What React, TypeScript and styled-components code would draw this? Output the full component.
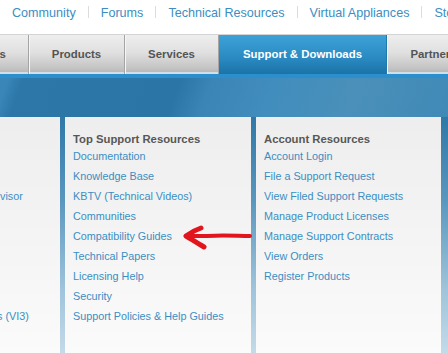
import styled, { createGlobalStyle } from "styled-components";

const GlobalStyle = createGlobalStyle`
  html, body {
    margin: 0;
    padding: 0;
    background: #ffffff;
    overflow: hidden;
  }
  body {
    font-family: "Liberation Sans", Arial, sans-serif;
  }
`;

const Page = styled.div`
  width: 448px;
  height: 353px;
  overflow: hidden;
  background: #ffffff;
`;

const TopLinks = styled.div`
  display: flex;
  align-items: center;
  height: 34px;
  padding: 0 0 11px 12px;
  box-sizing: border-box;
  white-space: nowrap;
`;

const TopLink = styled.a`
  color: #3b8ec2;
  font-size: 12.6px;
  text-decoration: none;
`;

const Separator = styled.span`
  display: inline-block;
  width: 1px;
  height: 12px;
  margin: 0 12px;
  vertical-align: -1px;
  background: #dcdcdc;
`;

const NavBar = styled.div`
  display: flex;
  width: 600px;
  height: 40px;
  margin-left: -68px;
  border-top: 1px solid #d4d4d4;
  box-sizing: border-box;
`;

const Tab = styled.div<{ $width: number; $active?: boolean }>`
  flex: 0 0 ${({ $width }) => $width}px;
  display: flex;
  align-items: center;
  justify-content: center;
  box-sizing: border-box;
  padding-bottom: 2px;
  font-size: 11.4px;
  font-weight: bold;
  white-space: nowrap;
  color: ${({ $active }) => ($active ? "#ffffff" : "#545454")};
  background: ${({ $active }) =>
    $active
      ? "linear-gradient(to bottom, #3da2d8 0%, #2b8cc4 55%, #1b73a6 100%)"
      : "linear-gradient(to bottom, #eeeeee 0%, #e0e0e0 45%, #c4c4c4 85%, #b2b2b2 100%)"};
  border-right: 1px solid ${({ $active }) => ($active ? "#1f79ac" : "#a4a4a4")};
  box-shadow: ${({ $active }) =>
    $active ? "none" : "inset 1px 0 0 #f6f6f6, inset 0 -2px 0 #d2dde4"};
`;

const Banner = styled.div`
  height: 43px;
  border-top: 4px solid #2a8fcc;
  box-sizing: border-box;
  background: linear-gradient(
    110deg,
    #3a86b8 0px,
    #3a86b8 8px,
    #2c76a8 22px,
    #2b74a6 170px,
    #3a84b6 200px,
    #418dbd 260px,
    #4a90ba 340px,
    #3f88b6 448px
  );
`;

const Content = styled.div`
  position: relative;
  display: flex;
  gap: 5px;
  height: 240px;
  background: linear-gradient(to bottom, #2f78a8 0%, #5a97be 35%, #9cc2da 70%, #c6dcea 100%);
`;

const Panel = styled.div<{ $width: number }>`
  flex: 0 0 ${({ $width }) => $width}px;
  box-sizing: border-box;
  padding: 15px 0 0 8px;
  overflow: hidden;
  background: linear-gradient(to bottom, #eeeeee 0%, #f4f4f4 50%, #fbfbfb 100%);
`;

const ClippedPanel = styled(Panel)`
  padding-left: 0;
`;

const Heading = styled.div`
  height: 14px;
  line-height: 14px;
  font-size: 11.3px;
  font-weight: bold;
  color: #575757;
  white-space: nowrap;
`;

const LinkRow = styled.a<{ $indent?: number }>`
  display: block;
  height: 20px;
  line-height: 20px;
  font-size: 10.8px;
  color: #3b8ec2;
  text-decoration: none;
  white-space: nowrap;
  text-indent: ${({ $indent }) => $indent ?? 0}px;
`;

const Arrow = styled.svg`
  position: absolute;
  left: 183px;
  top: 108px;
  width: 70px;
  height: 26px;
`;

const topLinks = [
  "Community",
  "Forums",
  "Technical Resources",
  "Virtual Appliances",
  "Store",
];

const tabs = [
  { label: "Solutions", width: 97 },
  { label: "Products", width: 96 },
  { label: "Services", width: 94 },
  { label: "Support & Downloads", width: 168, active: true },
  { label: "Partners", width: 94 },
];

const leftRows = ["", "", "visor", "", "", "", "", "", "s (VI3)"];

const supportLinks = [
  "Documentation",
  "Knowledge Base",
  "KBTV (Technical Videos)",
  "Communities",
  "Compatibility Guides",
  "Technical Papers",
  "Licensing Help",
  "Security",
  "Support Policies & Help Guides",
];

const accountLinks = [
  "Account Login",
  "File a Support Request",
  "View Filed Support Requests",
  "Manage Product Licenses",
  "Manage Support Contracts",
  "View Orders",
  "Register Products",
];

export default function App() {
  return (
    <Page>
      <GlobalStyle />
      <TopLinks>
        {topLinks.map((label, i) => (
          <span key={label}>
            {i > 0 && <Separator />}
            <TopLink href="#">{label}</TopLink>
          </span>
        ))}
      </TopLinks>
      <NavBar>
        {tabs.map((tab) => (
          <Tab key={tab.label} $width={tab.width} $active={tab.active}>
            {tab.label}
          </Tab>
        ))}
      </NavBar>
      <Banner />
      <Content>
        <ClippedPanel $width={60}>
          <Heading />
          {leftRows.map((label, i) => (
            <LinkRow key={i} href="#" $indent={label.startsWith("s") ? -3 : 0}>
              {label}
            </LinkRow>
          ))}
        </ClippedPanel>
        <Panel $width={186}>
          <Heading>Top Support Resources</Heading>
          {supportLinks.map((label) => (
            <LinkRow key={label} href="#">
              {label}
            </LinkRow>
          ))}
        </Panel>
        <Panel $width={185}>
          <Heading>Account Resources</Heading>
          {accountLinks.map((label) => (
            <LinkRow key={label} href="#">
              {label}
            </LinkRow>
          ))}
        </Panel>
        <Arrow viewBox="0 0 70 26">
          <path
            d="M67 11 C 55 11, 40 10, 24 11 C 16 11, 8 11, 3 11"
            stroke="#e2151d"
            strokeWidth="4"
            fill="none"
            strokeLinecap="round"
          />
          <path
            d="M18 3 C 12 5, 7 8, 3 11 C 8 14, 14 18, 21 22"
            stroke="#e2151d"
            strokeWidth="5"
            fill="none"
            strokeLinecap="round"
            strokeLinejoin="round"
          />
        </Arrow>
      </Content>
    </Page>
  );
}
